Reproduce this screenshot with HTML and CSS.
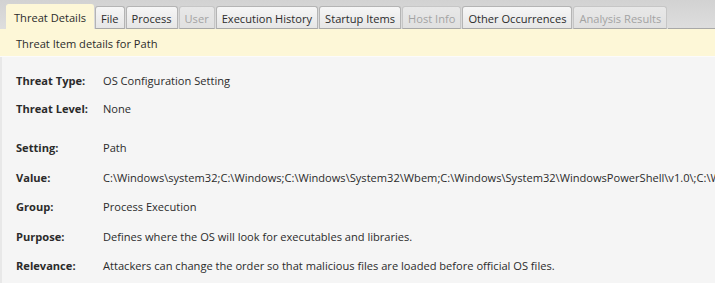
FILE: index.html
```html
<!DOCTYPE html>
<html>
<head>
<meta charset="utf-8">
<link rel="stylesheet" href="styles.css">
</head>
<body>
<div class="tabbar">
  <div class="tab active">Threat Details</div>
  <div class="tab">File</div>
  <div class="tab">Process</div>
  <div class="tab disabled">User</div>
  <div class="tab">Execution History</div>
  <div class="tab">Startup Items</div>
  <div class="tab disabled">Host Info</div>
  <div class="tab">Other Occurrences</div>
  <div class="tab disabled">Analysis Results</div>
  <div class="fill"></div>
</div>
<div class="banner">Threat Item details for Path</div>
<div class="content">
  <div class="grid first">
    <div class="lbl">Threat Type:</div><div class="val">OS Configuration Setting</div>
    <div class="lbl">Threat Level:</div><div class="val">None</div>
  </div>
  <div class="grid second">
    <div class="lbl">Setting:</div><div class="val">Path</div>
    <div class="lbl">Value:</div><div class="val clip">C:\Windows\system32;C:\Windows;C:\Windows\System32\Wbem;C:\Windows\System32\WindowsPowerShell\v1.0\;C:\Windows\System32\OpenSSH\</div>
    <div class="lbl">Group:</div><div class="val">Process Execution</div>
    <div class="lbl">Purpose:</div><div class="val">Defines where the OS will look for executables and libraries.</div>
    <div class="lbl">Relevance:</div><div class="val">Attackers can change the order so that malicious files are loaded before official OS files.</div>
  </div>
</div>
</body>
</html>
```
FILE: styles.css
```css
html, body {
  margin: 0;
  padding: 0;
  width: 715px;
  height: 283px;
  overflow: hidden;
  background: #f5f5f5;
  font-family: "Open Sans", "Noto Sans", sans-serif;
  font-size: 11.1px;
  color: #2b2b2b;
}
.tabbar {
  display: flex;
  align-items: flex-end;
  height: 29px;
  padding-left: 6px;
  box-sizing: border-box;
  background: linear-gradient(#d2d2d2, #dedede);
}
.tab {
  height: 23px;
  box-sizing: border-box;
  padding: 1px 5px 0;
  margin-right: 1px;
  display: flex;
  align-items: center;
  border: 1px solid #b4b4b4;
  border-bottom: 1px solid #a8a8a8;
  border-radius: 3px 3px 0 0;
  background: linear-gradient(#f6f6f6, #e6e6e6);
  color: #2b2b2b;
  white-space: nowrap;
}
.tab.disabled {
  color: #a3a3a3;
  border-color: #c6c6c6;
  border-bottom-color: #a8a8a8;
  background: linear-gradient(#e8e8e8, #e0e0e0);
}
.tab.active {
  height: 25px;
  padding: 1px 7px 0;
  background: #fdf7d7;
  border-color: #fdf7d7;
  border-bottom: none;
  color: #2b2b2b;
}
.fill {
  flex: 1;
  align-self: flex-end;
  border-bottom: 1px solid #a8a8a8;
}
.banner {
  height: 28px;
  box-sizing: border-box;
  padding-left: 16px;
  padding-top: 1px;
  display: flex;
  align-items: center;
  background: #fdf7d7;
  border-bottom: 1px solid #fbfbfb;
}
.content {
  padding: 15px 0 0 14px;
  border-left: 2px solid #e8e8e8;
  height: 230px;
  box-sizing: border-box;
  overflow: hidden;
}
.grid {
  display: grid;
  grid-template-columns: 87px minmax(0, 1fr);
  row-gap: 11.5px;
  line-height: 18px;
}
.grid.first {
  row-gap: 10px;
}
.grid.second {
  margin-top: 21px;
}
.lbl {
  font-weight: bold;
  white-space: nowrap;
}
.val {
  white-space: nowrap;
}
.val.clip {
  overflow: hidden;
}
```
